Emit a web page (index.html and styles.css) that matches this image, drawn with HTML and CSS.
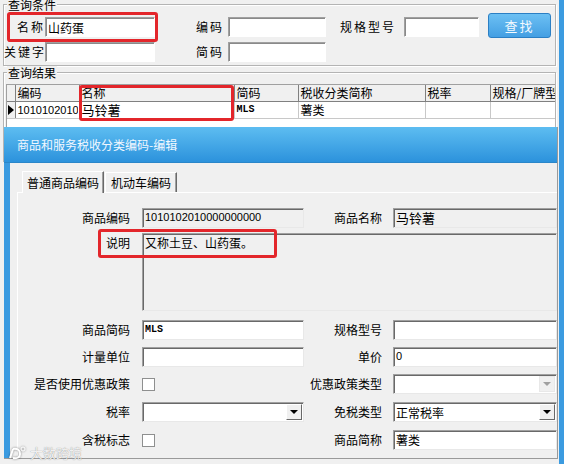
FILE: index.html
```html
<!DOCTYPE html>
<html lang="zh-CN">
<head>
    <meta charset="UTF-8">
    <meta name="viewport" content="width=device-width, initial-scale=1.0">
    <title>商品和服务税收分类编码</title>
    <link rel="stylesheet" href="styles.css">
</head>
<body>
<div class="app">
    <div class="group query">
        <div class="group-title">查询条件</div>
        <div class="query-row first">
            <label class="q-label w1">名称</label>
            <input class="field w-name" value="山药蛋">
            <label class="q-label w2">编码</label>
            <input class="field w-code">
            <label class="q-label w3">规格型号</label>
            <input class="field w-spec">
            <button class="find-btn">查找</button>
        </div>
        <div class="query-row">
            <label class="q-label w1">关键字</label>
            <input class="field w-name">
            <label class="q-label w2">简码</label>
            <input class="field w-code">
        </div>
    </div>

    <div class="group result">
        <div class="group-title">查询结果</div>
        <div class="grid-box">
            <table class="grid">
                <colgroup>
                    <col style="width:8px">
                    <col style="width:64px">
                    <col style="width:155px">
                    <col style="width:64px">
                    <col style="width:127px">
                    <col style="width:65px">
                    <col style="width:80px">
                </colgroup>
                <thead>
                    <tr>
                        <th class="ind"></th>
                        <th>编码</th>
                        <th>名称</th>
                        <th>简码</th>
                        <th>税收分类简称</th>
                        <th>税率</th>
                        <th>规格/厂牌型号</th>
                    </tr>
                </thead>
                <tbody>
                    <tr>
                        <td class="ind"><span class="arrow"></span></td>
                        <td class="num"><div class="clip">1010102010000000000</div></td>
                        <td class="big">马铃薯</td>
                        <td class="mono">MLS</td>
                        <td>薯类</td>
                        <td></td>
                        <td></td>
                    </tr>
                </tbody>
            </table>
        </div>
    </div>

    <div class="dialog">
        <div class="dlg-title">商品和服务税收分类编码-编辑</div>
        <div class="dlg-body">
            <div class="tabs">
                <div class="tab active">普通商品编码</div>
                <div class="tab">机动车编码</div>
            </div>
            <div class="panel">
                <div class="form">
                    <div class="f-label">商品编码</div>
                    <div class="f-input readonly num">1010102010000000000</div>
                    <div class="f-label col2">商品名称</div>
                    <div class="f-input readonly big">马铃薯</div>

                    <div class="f-label top">说明</div>
                    <div class="f-input memo">又称土豆、山药蛋。</div>

                    <div class="f-label">商品简码</div>
                    <div class="f-input mono">MLS</div>
                    <div class="f-label col2">规格型号</div>
                    <div class="f-input"></div>

                    <div class="f-label">计量单位</div>
                    <div class="f-input"></div>
                    <div class="f-label col2">单价</div>
                    <div class="f-input num">0</div>

                    <div class="f-label">是否使用优惠政策</div>
                    <div class="f-cell"><span class="check"></span></div>
                    <div class="f-label col2">优惠政策类型</div>
                    <div class="f-input select disabled"><span class="sel-text"></span><span class="dd"></span></div>

                    <div class="f-label">税率</div>
                    <div class="f-input select"><span class="sel-text"></span><span class="dd"></span></div>
                    <div class="f-label col2">免税类型</div>
                    <div class="f-input select"><span class="sel-text">正常税率</span><span class="dd"></span></div>

                    <div class="f-label">含税标志</div>
                    <div class="f-cell"><span class="check"></span></div>
                    <div class="f-label col2">商品简称</div>
                    <div class="f-input">薯类</div>
                </div>
            </div>
        </div>
    </div>

    <div class="mark">
        <svg width="18" height="14" viewBox="0 0 18 14">
            <path d="M2 12 L5 3 M5 3 Q12 2 12 8 Q12 13 5 12" fill="none" stroke="#fff" stroke-width="2"/>
            <circle cx="15" cy="3" r="2" fill="none" stroke="#fff" stroke-width="1"/>
        </svg>
        <span>大数跨境</span>
    </div>
    <div class="hl hl-name"></div>
    <div class="hl hl-col"></div>
    <div class="hl hl-desc"></div>
</div>
</body>
</html>
```

FILE: styles.css
```css
body {
    margin: 0;
    background-color: #f0f0f0;
    font-family: "Noto Sans CJK SC", "DejaVu Sans", sans-serif;
    font-size: 12px;
    color: #000;
}
.app {
    position: relative;
    box-sizing: border-box;
    width: 564px;
    height: 464px;
    padding-left: 3px;
    border-right: 5px solid #3b9be0;
    overflow: hidden;
}
.group {
    box-sizing: border-box;
    width: 553px;
    border: 1px solid #b4b4b4;
    box-shadow: inset 1px 1px 0 #fff, 1px 1px 0 #fff;
}
.group-title {
    width: fit-content;
    margin: -7px 0 0 3px;
    padding: 0 1px;
    line-height: 14px;
    background-color: #f0f0f0;
}
.query {
    margin-top: 4px;
    padding-bottom: 3px;
}
.query-row {
    display: flex;
    align-items: flex-end;
    margin-top: 4px;
}
.query-row.first {
    margin-top: 1px;
    height: 25px;
}
.q-label {
    box-sizing: border-box;
    height: 20px;
    line-height: 20px;
    text-align: right;
    letter-spacing: 2px;
    white-space: nowrap;
}
.first .q-label,
.first .field {
    margin-bottom: 1px;
}
.w1 { width: 41px; padding-right: 0; }
.w2 { width: 73px; padding-right: 4px; }
.w3 { width: 78px; padding-right: 8px; }
.field {
    box-sizing: border-box;
    height: 20px;
    padding: 0 2px;
    border: 1px solid #fff;
    border-top-color: #a0a0a0;
    border-left-color: #a0a0a0;
    box-shadow: inset 1px 1px 0 #8a8a8a;
    background-color: #fff;
    font-family: "Noto Sans CJK SC", sans-serif;
    font-size: 12px;
    outline: none;
}
.w-name { width: 110px; }
.w-code { width: 98px; }
.w-spec { width: 75px; }
.find-btn {
    width: 63px;
    height: 25px;
    margin-left: 9px;
    border: 1px solid #2b7fc4;
    border-radius: 3px;
    background: linear-gradient(#6cc0f3, #449fe3);
    color: #f4faff;
    font-family: "Noto Sans CJK SC", sans-serif;
    font-size: 13px;
    letter-spacing: 2px;
    padding: 0;
}
.result {
    margin-top: 6px;
    height: 90px;
}
.grid-box {
    width: 548px;
    height: 80px;
    margin: 4px 0 0 2px;
    border-left: 1px solid #a0a0a0;
    border-top: 1px solid #a0a0a0;
    background-color: #fff;
    overflow: hidden;
}
.grid {
    width: 563px;
    table-layout: fixed;
    border-collapse: collapse;
}
.grid th,
.grid td {
    height: 16px;
    padding: 0 2px;
    line-height: 16px;
    text-align: left;
    white-space: nowrap;
    overflow: hidden;
}
.grid th {
    font-weight: normal;
    background-color: #f0f0f0;
    border-right: 1px solid #808080;
    border-bottom: 1px solid #808080;
}
.grid td {
    border-right: 1px solid #c8c8c8;
    border-bottom: 1px solid #c8c8c8;
}
.grid .ind {
    padding: 0;
    background-color: #f0f0f0;
    border-right: 1px solid #808080;
}
.clip {
    width: 60px;
    overflow: hidden;
}
.arrow {
    display: block;
    width: 0;
    height: 0;
    margin-left: 1px;
    border-top: 5px solid transparent;
    border-bottom: 5px solid transparent;
    border-left: 6px solid #000;
}
.num {
    font-family: "Liberation Sans", sans-serif;
    font-size: 11px;
}
.big {
    font-size: 13px;
}
.mono {
    font-family: "Liberation Mono", monospace;
    font-weight: bold;
    font-size: 10px;
}
.dialog {
    position: absolute;
    left: 4px;
    top: 127px;
    width: 553px;
    height: 331px;
    background-color: #3a9ae0;
    border-right: 1px solid #9a9a9a;
    border-bottom: 1px solid #9a9a9a;
    box-shadow: 7px 0 0 #eceff2;
}
.dlg-title {
    height: 35px;
    padding-left: 13px;
    line-height: 35px;
    color: #f2f8ff;
    background: linear-gradient(#5dbdf1, #2c92dc);
    border-bottom: 1px solid #2a86c9;
}
.dlg-body {
    height: 287px;
    margin-left: 6px;
    padding-top: 8px;
    background-color: #f0f0f0;
}
.tabs {
    display: flex;
    align-items: flex-end;
    margin-left: 12px;
    position: relative;
    z-index: 1;
}
.tab {
    height: 19px;
    padding: 0 5px;
    line-height: 19px;
    border-top: 1px solid #fff;
    border-left: 1px solid #fff;
    border-right: 1px solid #696969;
    box-shadow: inset -1px 0 0 #a0a0a0;
    margin-left: 1px;
}
.tab.active {
    height: 21px;
    padding: 0 4px;
    line-height: 21px;
    margin-left: 0;
    margin-bottom: -1px;
    background-color: #f0f0f0;
}
.panel {
    height: 250px;
    margin-left: 7px;
    padding: 15px 0 0 4px;
    border-top: 1px solid #fff;
    border-left: 1px solid #fff;
}
.form {
    display: grid;
    grid-template-columns: 120px 162px 89px 164px;
    grid-template-rows: 20px 78px 20px 20px 21px 21px 20px;
    row-gap: 7px;
}
.f-label {
    padding-right: 12px;
    line-height: 20px;
    text-align: right;
    white-space: nowrap;
}
.f-label.col2 {
    padding-right: 11px;
}
.f-label.top {
    line-height: 16px;
}
.f-input {
    box-sizing: border-box;
    height: 20px;
    padding: 0 2px;
    line-height: 17px;
    white-space: nowrap;
    overflow: hidden;
    background-color: #fff;
    border: 1px solid #e8e8e8;
    border-top-color: #a0a0a0;
    border-left-color: #a0a0a0;
    box-shadow: inset 1px 1px 0 #696969;
}
.f-input.readonly {
    background-color: #f0f0f0;
}
.f-input.memo {
    grid-column: 2 / 5;
    height: 78px;
    margin-top: -2px;
    background-color: #f0f0f0;
}
.f-cell {
    display: flex;
    align-items: center;
}
.check {
    box-sizing: border-box;
    width: 13px;
    height: 13px;
    border: 1px solid #8e8f8f;
    background-color: #fff;
}
.select {
    display: flex;
    align-items: center;
    padding-right: 1px;
}
.sel-text {
    flex: 1;
}
.dd {
    position: relative;
    box-sizing: border-box;
    width: 16px;
    height: 16px;
    background-color: #f0f0f0;
    border: 1px solid #fff;
    border-right-color: #696969;
    border-bottom-color: #696969;
}
.dd::after {
    content: "";
    position: absolute;
    left: 3px;
    top: 5px;
    border-left: 4px solid transparent;
    border-right: 4px solid transparent;
    border-top: 4px solid #000;
}
.disabled .dd::after {
    border-top-color: #a0a0a0;
}
.disabled .dd {
    border-color: #e8e8e8;
}
.mark {
    position: absolute;
    left: 8px;
    bottom: 2px;
    display: flex;
    align-items: center;
    gap: 4px;
    color: rgba(255, 255, 255, 0.9);
    font-size: 13px;
    text-shadow: 0 0 1px rgba(0, 0, 0, 0.5);
}
.mark svg {
    filter: drop-shadow(0 0 1px rgba(0, 0, 0, 0.45));
}
.hl {
    position: absolute;
    box-sizing: border-box;
    border: 3px solid #e3262b;
    border-radius: 3px;
}
.hl-name {
    left: 7px;
    top: 12px;
    width: 151px;
    height: 30px;
}
.hl-col {
    left: 79px;
    top: 85px;
    width: 155px;
    height: 36px;
}
.hl-desc {
    left: 98px;
    top: 229px;
    width: 179px;
    height: 29px;
}
```
